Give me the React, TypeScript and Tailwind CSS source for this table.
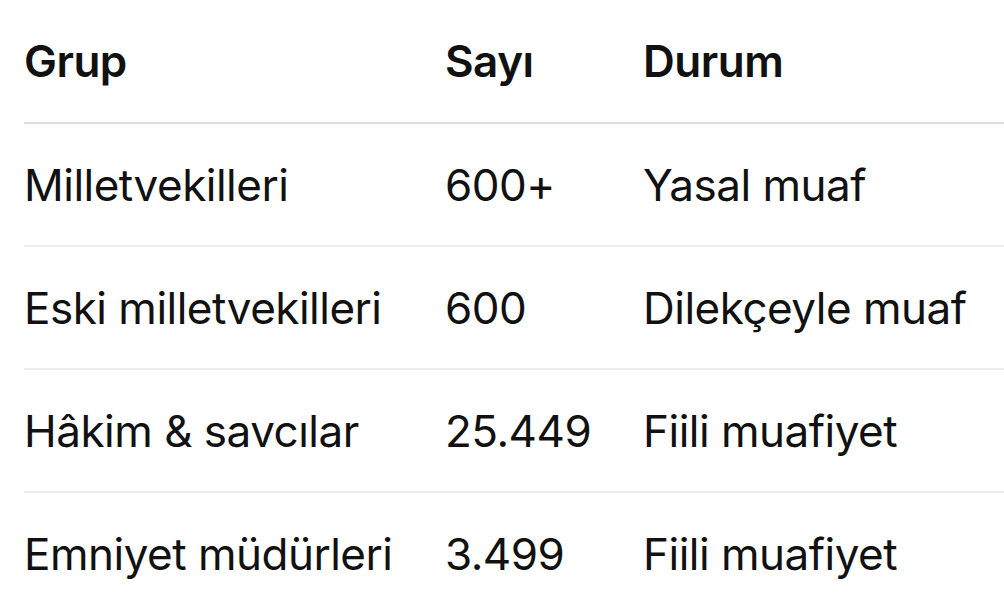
const rows = [
  ["Milletvekilleri", "600+", "Yasal muaf"],
  ["Eski milletvekilleri", "600", "Dilekçeyle muaf"],
  ["Hâkim & savcılar", "25.449", "Fiili muafiyet"],
  ["Emniyet müdürleri", "3.499", "Fiili muafiyet"],
];

export default function App() {
  return (
    <main
      className="w-[1004px] h-[612px] overflow-hidden bg-white pl-[24px] text-[#111111]"
      style={{ fontFamily: "Inter, 'Noto Sans', sans-serif" }}
    >
      <div className="grid grid-cols-[421px_198px_1fr] h-[124px] items-center border-b-2 border-[#dcdcdc] text-[44px] font-semibold tracking-[-0.5px]">
        <div>Grup</div>
        <div>Sayı</div>
        <div>Durum</div>
      </div>
      {rows.map((r, i) => (
        <div
          key={i}
          className="grid grid-cols-[421px_198px_1fr] h-[123px] items-center border-b-2 border-[#ececec] text-[44px] tracking-[-0.5px] whitespace-nowrap"
        >
          <div>{r[0]}</div>
          <div>{r[1]}</div>
          <div>{r[2]}</div>
        </div>
      ))}
    </main>
  );
}
